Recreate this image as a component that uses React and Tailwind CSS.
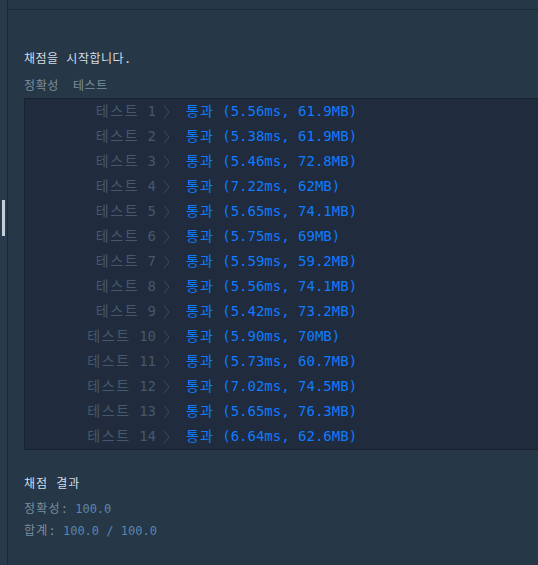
const tests = [
  ['1', '5.56ms, 61.9MB'],
  ['2', '5.38ms, 61.9MB'],
  ['3', '5.46ms, 72.8MB'],
  ['4', '7.22ms, 62MB'],
  ['5', '5.65ms, 74.1MB'],
  ['6', '5.75ms, 69MB'],
  ['7', '5.59ms, 59.2MB'],
  ['8', '5.56ms, 74.1MB'],
  ['9', '5.42ms, 73.2MB'],
  ['10', '5.90ms, 70MB'],
  ['11', '5.73ms, 60.7MB'],
  ['12', '7.02ms, 74.5MB'],
  ['13', '5.65ms, 76.3MB'],
  ['14', '6.64ms, 62.6MB'],
]

function Chevron() {
  return (
    <svg width="7" height="14" viewBox="0 0 7 14" className="shrink-0">
      <path d="M1 0.5 L6 7 L1 13.5" fill="none" stroke="#3a4a5d" strokeWidth="1" />
    </svg>
  )
}

export default function App() {
  return (
    <div
      className="flex w-[538px] h-[565px] overflow-hidden bg-[#263747]"
      style={{ fontFamily: '"DejaVu Sans Mono", "Noto Sans CJK KR", monospace' }}
    >
      {/* left gutter with scroll thumb */}
      <div className="relative w-[8px] shrink-0 bg-[#283a4c] border-r border-[#1c2837]">
        <div className="absolute left-[2px] top-[200px] w-[3px] h-[36px] bg-[#c5ced6]" />
      </div>

      <div className="flex-1 flex flex-col min-w-0">
        <div className="h-[10px] border-b border-[#1c2837]" />

        <div className="pl-4 pt-[40px]">
          <p className="text-[12px] leading-[18px] text-[#d5dde5] tracking-[0.5px]">채점을 시작합니다.</p>

          <div className="mt-[9px] flex gap-[14px] text-[12px] leading-[18px] text-[#7b8e9e] tracking-[0.6px]">
            <span>정확성</span>
            <span>테스트</span>
          </div>

          {/* output box */}
          <div className="mt-[3px] bg-[#202b3d] border border-r-0 border-[#19232f]">
            {tests.map(([n, r]) => (
              <div key={n} className="flex items-center h-[25px] text-[14px]">
                <span className="w-[131px] text-right text-[#46586b]">
                  <span className="tracking-[1.6px]">테스트</span> {n}
                </span>
                <span className="ml-[7px]">
                  <Chevron />
                </span>
                <span className="ml-[16px] text-[#0f7bff]">
                  <span className="tracking-[1px]">통과</span> ({r})
                </span>
              </div>
            ))}
          </div>

          <p className="mt-[25px] text-[12px] leading-[18px] text-[#d5dde5] tracking-[1px]">채점 결과</p>
          <div className="mt-[5px] text-[12px] leading-[22px]">
            <p className="text-[#7b8e9e]">
              <span className="tracking-[1.2px]">정확성</span>: <span className="text-[#5a86ad]">100.0</span>
            </p>
            <p className="text-[#7b8e9e]">
              <span className="tracking-[1.2px]">합계</span>: <span className="text-[#5a86ad]">100.0 / 100.0</span>
            </p>
          </div>
        </div>
      </div>
    </div>
  )
}
